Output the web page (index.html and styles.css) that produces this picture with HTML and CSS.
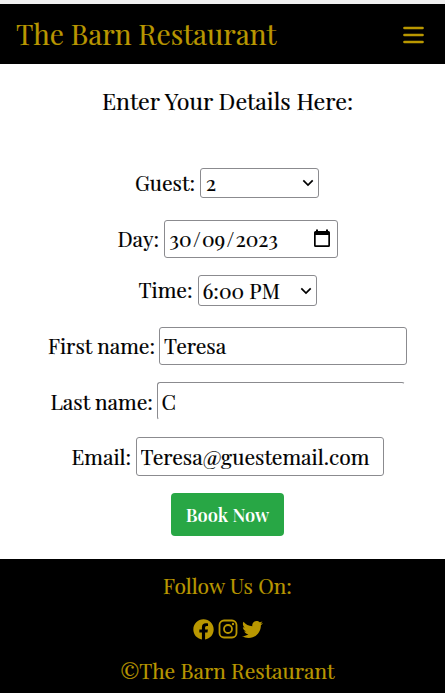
FILE: index.html
```html
<!DOCTYPE html>
<html lang="en">
<head>
<meta charset="utf-8">
<meta name="viewport" content="width=device-width, initial-scale=1">
<title>The Barn Restaurant</title>
<link rel="stylesheet" href="styles.css">
</head>
<body>
<header class="navbar">
  <span class="brand">The Barn Restaurant</span>
  <svg class="menu" width="21" height="18" viewBox="0 0 21 18" aria-label="Menu"><path d="M1.500 2h18M1.500 9h18M1.500 16h18" stroke="currentColor" stroke-width="2.700" stroke-linecap="round"/></svg>
</header>
<main class="booking">
  <h1 class="heading">Enter Your Details Here:</h1>
  <div class="row row-guest">
    <span class="label">Guest:</span>
    <div class="field select"><span class="value">2</span>
      <svg class="chevron" width="12" height="8" viewBox="0 0 12 8"><path d="M1.3 1.3 6 6l4.700-4.700" fill="none" stroke="#000" stroke-width="1.700"/></svg></div>
  </div>
  <div class="row row-day">
    <span class="label">Day:</span>
    <div class="field date"><span class="value">30<span class="slash">/</span>09<span class="slash">/</span>2023</span>
      <svg class="calendar" width="18" height="20" viewBox="0 0 18 20"><path fill="#000" fill-rule="evenodd" d="M3 .5h2V2h8V.500h2V2h.5A1.500 1.500 0 0 1 17 3.500v13a1.500 1.500 0 0 1-1.500 1.500h-13A1.500 1.500 0 0 1 1 16.500v-13A1.500 1.500 0 0 1 2.500 2H3zM2.700 6v10.300h12.600V6z"/></svg></div>
  </div>
  <div class="row row-time">
    <span class="label">Time:</span>
    <div class="field select"><span class="value">6:00 PM</span>
      <svg class="chevron" width="12" height="8" viewBox="0 0 12 8"><path d="M1.3 1.3 6 6l4.700-4.700" fill="none" stroke="#000" stroke-width="1.700"/></svg></div>
  </div>
  <div class="row row-first">
    <label class="label" for="first">First name:</label>
    <input class="field" id="first" value="Teresa">
  </div>
  <div class="row row-last">
    <label class="label" for="last">Last name:</label>
    <input class="field" id="last" value="C">
  </div>
  <div class="row row-email">
    <label class="label" for="email">Email:</label>
    <input class="field" id="email" value="Teresa@guestemail.com">
  </div>
  <button class="book">Book Now</button>
</main>
<footer class="footer">
  <p class="follow">Follow Us On:</p>
  <div class="social">
    <svg width="21" height="21" viewBox="0 0 512 512"><path fill="currentColor" d="M504 256C504 119 393 8 256 8S8 119 8 256c0 123.780 90.690 226.380 209.250 245V327.690h-63V256h63v-54.640c0-62.150 37-96.480 93.670-96.480 27.140 0 55.520 4.840 55.520 4.840v61h-31.280c-30.800 0-40.410 19.120-40.410 38.730V256h68.780l-11 71.690h-57.780V501C413.310 482.380 504 379.780 504 256z"/></svg>
    <svg width="20" height="20" viewBox="0 0 20 20"><rect x="1.500" y="1.500" width="17" height="17" rx="4.500" fill="none" stroke="currentColor" stroke-width="1.800"/><circle cx="10" cy="10" r="4" fill="none" stroke="currentColor" stroke-width="1.800"/><circle cx="15" cy="5" r="1.200" fill="currentColor"/></svg>
    <svg width="21" height="21" viewBox="0 0 512 512"><path fill="currentColor" d="M459.370 151.716c.325 4.548.325 9.097.325 13.645 0 138.720-105.583 298.558-298.558 298.558-59.452 0-114.680-17.219-161.137-47.106 8.447.974 16.568 1.299 25.340 1.299 49.055 0 94.213-16.568 130.274-44.832-46.132-.975-84.792-31.188-98.112-72.772 6.498.974 12.995 1.624 19.818 1.624 9.421 0 18.843-1.300 27.614-3.573-48.081-9.747-84.143-51.980-84.143-102.985v-1.299c13.969 7.797 30.214 12.670 47.431 13.319-28.264-18.843-46.781-51.005-46.781-87.391 0-19.492 5.197-37.360 14.294-52.954 51.655 63.675 129.300 105.258 216.365 109.807-1.624-7.797-2.599-15.918-2.599-24.040 0-57.828 46.782-104.934 104.934-104.934 30.213 0 57.502 12.670 76.670 33.137 23.715-4.548 46.456-13.320 66.599-25.340-7.798 24.366-24.366 44.833-46.132 57.827 21.117-2.273 41.584-8.122 60.426-16.243-14.292 20.791-32.161 39.308-52.628 54.253z"/></svg>
  </div>
  <p class="copyright">©The Barn Restaurant</p>
</footer>
</body>
</html>
```

FILE: styles.css
```css
* { box-sizing: border-box; }
body {
  margin: 0;
  height: 693px;
  overflow: hidden;
  border-top: 4px solid #efefef;
  background: #fff;
  color: #000;
  font-family: "Playfair Display", "Liberation Serif", serif;
  font-size: 21px;
  display: flex;
  flex-direction: column;
}
.navbar {
  height: 60px;
  flex: none;
  padding: 0 21px 0 16px;
  display: flex;
  align-items: center;
  justify-content: space-between;
  background: #000;
  color: #b99700;
}
.brand { font-size: 28px; line-height: 60px; -webkit-text-stroke: .2px; }
.menu { margin-top: 1px; }
.booking {
  height: 495px;
  flex: none;
  padding-left: 10px;
  display: flex;
  flex-direction: column;
  align-items: center;
}
.heading { margin: 21px 0 67px; font-size: 23.200px; font-weight: 400; line-height: 32px; height: 16px; white-space: nowrap; -webkit-text-stroke: .2px; }
.row { display: flex; align-items: center; -webkit-text-stroke: .2px; }
.label { flex: none; white-space: nowrap; margin-top: -3px; }
.field {
  height: 38px;
  border: 1px solid #8b8b8f;
  border-radius: 3px;
  padding: 0 4px;
  background: #fff;
  color: #000;
  font: inherit;
  display: flex;
  align-items: center;
  justify-content: space-between;
}
.value { white-space: nowrap; margin-top: -2px; }
input.field { width: 248px; outline: 0; padding-bottom: 2px; }
.row-guest { height: 30px; margin: 0 1px 22px 0; }
.row-guest .label { width: 65px; }
.row-guest .field { width: 119px; height: 30px; padding-left: 5px; }
.row-day { height: 38px; margin-bottom: 17px; }
.row-day .label { width: 46px; }
.row-day .field { width: 174px; padding: 0 6px 0 5px; }
.slash { margin: 0 1.300px; }
.row-time { height: 31px; margin-bottom: 21px; }
.row-time .label { width: 59px; }
.row-time .field { width: 119px; height: 31px; }
.row-first { height: 38px; margin-bottom: 17px; }
.row-first .label { width: 111px; }
.row-last { height: 38px; margin-bottom: 17px; }
.row-last .label { width: 106px; margin-top: -1px; }
.row-last .field { border-right-color: transparent; border-bottom-color: transparent; padding-bottom: 0; }
.row-email { height: 39px; margin-bottom: 17px; }
.row-email .label { width: 64px; margin-top: -1px; }
.row-email .field { height: 39px; }
.book {
  width: 113px;
  height: 43px;
  padding: 0;
  border: 0;
  border-radius: 4px;
  background: #28a745;
  color: #fff;
  font: inherit;
  font-size: 18.200px;
  font-weight: 600;
}
.footer {
  flex: 1;
  padding-left: 10px;
  display: flex;
  flex-direction: column;
  align-items: center;
  background: #000;
  color: #b99700;
}
.follow, .copyright { margin: 0; line-height: 28px; white-space: nowrap; -webkit-text-stroke: .2px; }
.follow { margin-top: 12px; }
.social { display: flex; align-items: center; gap: 4px; height: 22px; margin: 19px 0 16px; }
```
